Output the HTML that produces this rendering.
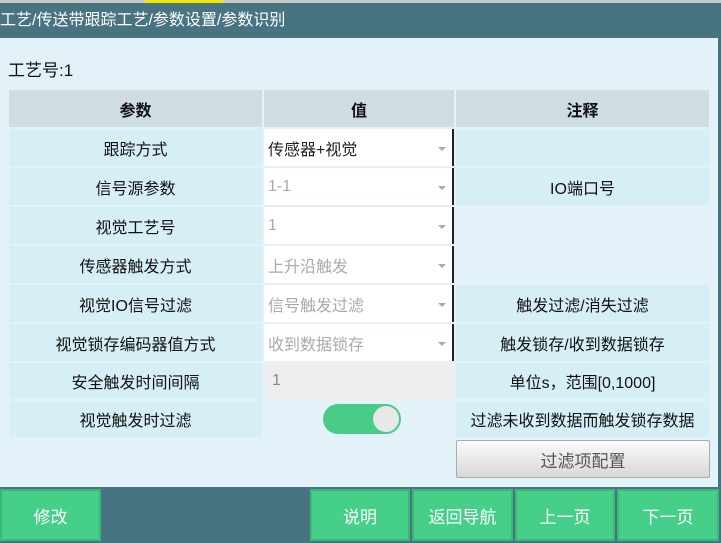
<!DOCTYPE html>
<html><head><meta charset="utf-8"><style>
*{margin:0;padding:0;box-sizing:border-box}
body{width:721px;height:543px;overflow:hidden;background:#e3f2f8;font-family:"Liberation Sans","Noto Sans CJK SC",sans-serif;position:relative;color:#111}
.a{position:absolute}
.c{position:absolute;display:flex;align-items:center;justify-content:center;font-size:16px}
.p{background:#d6eef6}
.h{background:#cfdde2;font-weight:bold}
.v{background:#fff;justify-content:flex-start;padding-left:4px;color:#aaa;border-right:2px solid #222}
.v::after{content:"";position:absolute;right:6px;top:50%;border:4px solid transparent;border-top:4px solid #aaa;margin-top:-1px}
.btn{position:absolute;top:489px;height:52px;background:#45cf89;color:#fff;font-size:16px;display:flex;align-items:center;justify-content:center;border:2px solid #3bb877}
</style></head><body>
<div class="a" style="left:0;top:0;width:721px;height:3px;background:#c8c8c8"></div>
<div class="a" style="left:145px;top:0;width:78px;height:3px;background:#f0e800"></div>
<div class="a" style="left:0;top:3px;width:721px;height:35px;background:#487482;color:#fff;font-size:16px;line-height:35px">工艺/传送带跟踪工艺/参数设置/参数识别</div>
<div class="a" style="left:718px;top:38px;width:3px;height:449px;background:#487482"></div>
<div class="a" style="left:8px;top:56px;font-size:17px">工艺号:1</div>

<div class="c h" style="left:9px;top:90px;width:253px;height:37px">参数</div>
<div class="c h" style="left:264px;top:90px;width:190px;height:37px">值</div>
<div class="c h" style="left:456px;top:90px;width:253px;height:37px">注释</div>

<div class="c p" style="left:9px;top:129px;width:253px;height:37px">跟踪方式</div>
<div class="c v" style="left:264px;top:129px;width:190px;height:37px;color:#222">传感器+视觉</div>
<div class="c p" style="left:456px;top:129px;width:253px;height:37px"></div>

<div class="c p" style="left:9px;top:168px;width:253px;height:37px">信号源参数</div>
<div class="c v" style="left:264px;top:168px;width:190px;height:37px">1-1</div>
<div class="c p" style="left:456px;top:168px;width:253px;height:37px">IO端口号</div>

<div class="c p" style="left:9px;top:207px;width:253px;height:37px">视觉工艺号</div>
<div class="c v" style="left:264px;top:207px;width:190px;height:37px">1</div>

<div class="c p" style="left:9px;top:246px;width:253px;height:37px">传感器触发方式</div>
<div class="c v" style="left:264px;top:246px;width:190px;height:37px">上升沿触发</div>

<div class="c p" style="left:9px;top:285px;width:253px;height:37px">视觉IO信号过滤</div>
<div class="c v" style="left:264px;top:285px;width:190px;height:37px">信号触发过滤</div>
<div class="c p" style="left:456px;top:285px;width:253px;height:37px">触发过滤/消失过滤</div>

<div class="c p" style="left:9px;top:324px;width:253px;height:37px">视觉锁存编码器值方式</div>
<div class="c v" style="left:264px;top:324px;width:190px;height:37px">收到数据锁存</div>
<div class="c p" style="left:456px;top:324px;width:253px;height:37px">触发锁存/收到数据锁存</div>

<div class="c p" style="left:9px;top:363px;width:253px;height:36px">安全触发时间间隔</div>
<div class="c" style="left:264px;top:363px;width:190px;height:36px;background:#eee;color:#888;justify-content:flex-start;padding-left:8px">1</div>
<div class="c p" style="left:456px;top:363px;width:253px;height:36px">单位s，范围[0,1000]</div>

<div class="c p" style="left:9px;top:401px;width:253px;height:36px">视觉触发时过滤</div>
<div class="a" style="left:323px;top:404px;width:78px;height:30px;border-radius:15px;background:#48cc88"></div>
<div class="a" style="left:373px;top:406px;width:26px;height:26px;border-radius:13px;background:#e8e8e8"></div>
<div class="c p" style="left:456px;top:401px;width:253px;height:36px">过滤未收到数据而触发锁存数据</div>

<div class="c" style="left:456px;top:440px;width:254px;height:38px;background:linear-gradient(#fafafa,#d8d8d8);border:1px solid #aaa;border-radius:2px;color:#555;font-size:17px">过滤项配置</div>

<div class="a" style="left:0;top:487px;width:721px;height:56px;background:#487482"></div>
<div class="btn" style="left:0;width:101px;font-size:17px">修改</div>
<div class="btn" style="left:310px;width:100px;font-size:17px">说明</div>
<div class="btn" style="left:412px;width:101px;font-size:17px">返回导航</div>
<div class="btn" style="left:515px;width:100px;font-size:17px">上一页</div>
<div class="btn" style="left:617px;width:102px;font-size:17px">下一页</div>
</body></html>
